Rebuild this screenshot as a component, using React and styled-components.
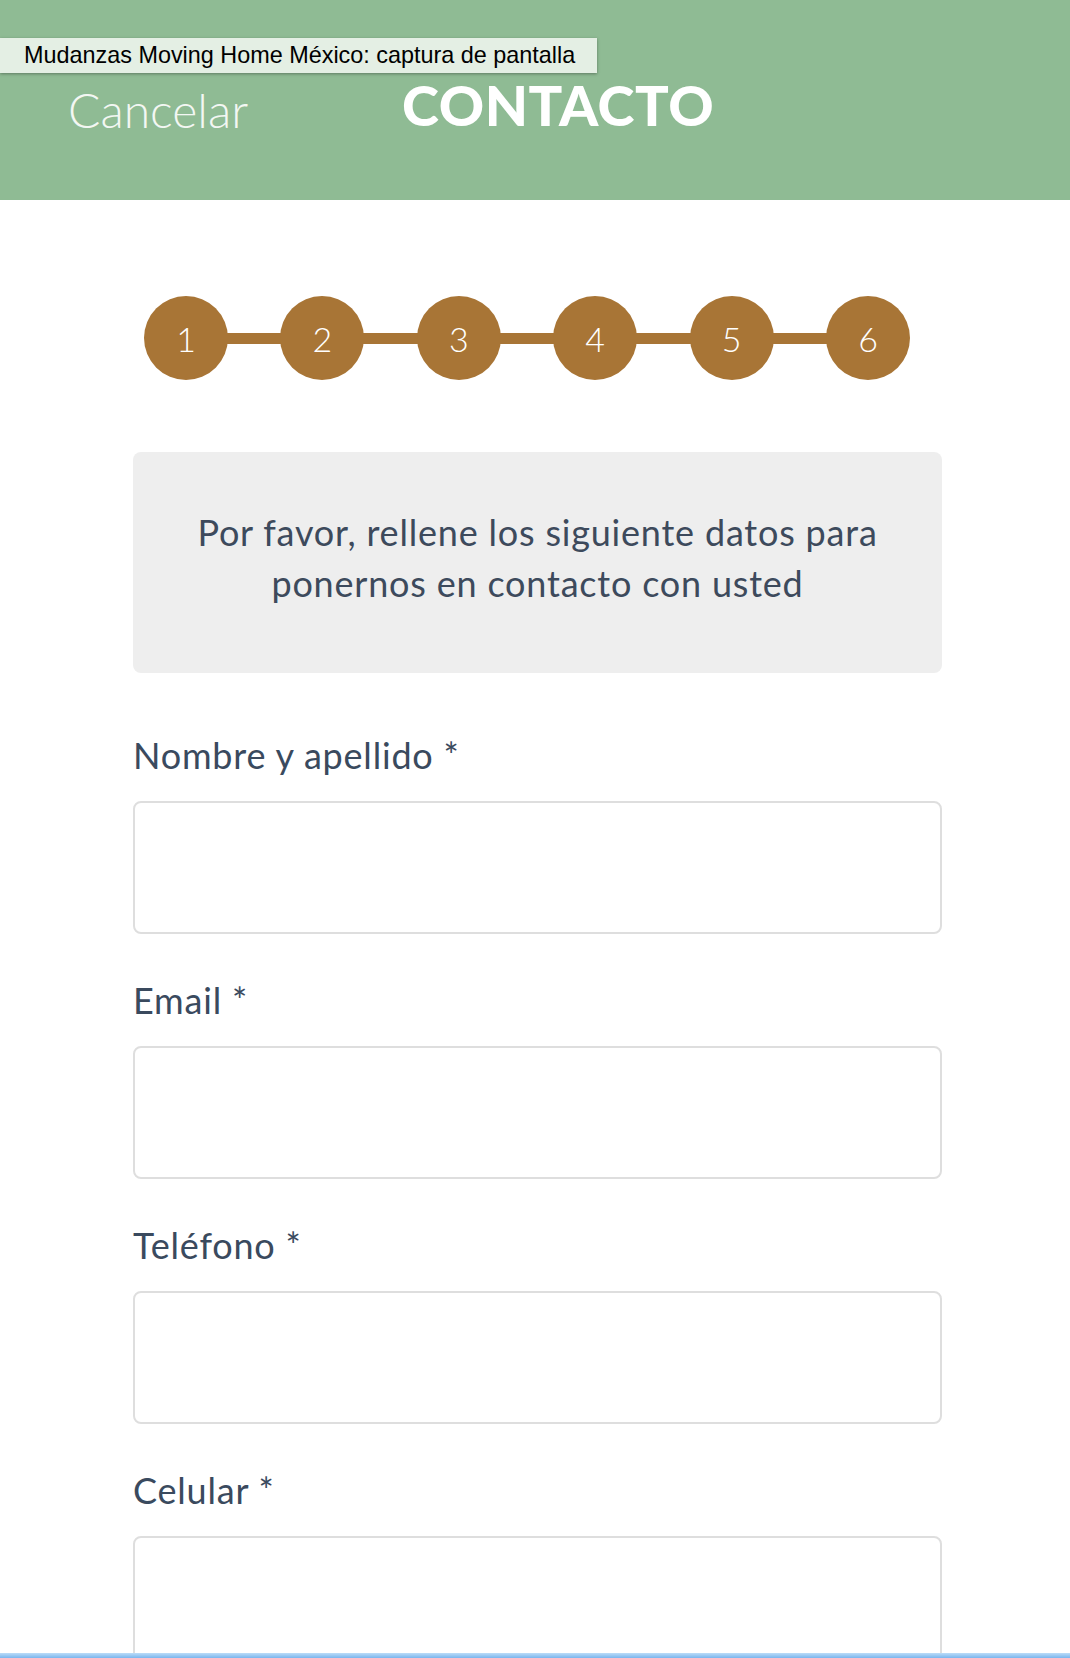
import React from "react"
import styled, { createGlobalStyle } from "styled-components"

const GlobalStyle = createGlobalStyle`
    html, body {
        margin: 0;
        padding: 0;
        background: #ffffff;
        font-family: "Lato", "Noto Sans", sans-serif;
        overflow: hidden;
    }
    * {
        box-sizing: border-box;
    }
`

const Page = styled.div`
    position: relative;
    min-height: 1658px;
`

const Header = styled.header`
    display: flex;
    align-items: center;
    gap: 154px;
    height: 200px;
    padding: 20px 0 0 68px;
    background-color: #8fbb94;
`

const Cancel = styled.span`
    font-size: 48px;
    font-weight: 300;
    line-height: 1;
    color: #f3f7f3;
`

const Title = styled.h1`
    margin: 0;
    font-size: 56px;
    font-weight: 900;
    line-height: 1;
    letter-spacing: 0.01em;
    color: #ffffff;
    transform: translateY(-5px);
`

const Tooltip = styled.div`
    position: absolute;
    top: 38px;
    left: 0;
    width: 597px;
    height: 35px;
    display: flex;
    align-items: center;
    padding-left: 24px;
    background-color: #e4efe4;
    box-shadow: 0 1px 3px rgba(0,0,0,0.35);
    font-family: "Liberation Sans", Arial, sans-serif;
    font-size: 23.4px;
    color: #000000;
`

const Main = styled.main`
    width: 809px;
    margin-left: 133px;
    padding-top: 96px;
`

const Stepper = styled.ol`
    display: flex;
    align-items: center;
    width: 766px;
    margin: 0 0 0 11px;
    padding: 0;
    list-style: none;
`

const Step = styled.li`
    flex: none;
    width: 84px;
    height: 84px;
    display: flex;
    align-items: center;
    justify-content: center;
    border-radius: 50%;
    background-color: #a87536;
    color: #ffffff;
    font-size: 34px;
    font-weight: 300;
`

const Connector = styled.span`
    flex: 1;
    height: 11px;
    margin: 0 -2px;
    background-color: #a87536;
`

const InfoBox = styled.div`
    display: flex;
    align-items: center;
    justify-content: center;
    height: 221px;
    margin-top: 72px;
    padding: 0 20px 10px;
    background-color: #eeeeee;
    border-radius: 8px;
    text-align: center;
    font-size: 36px;
    letter-spacing: 0.8px;
    line-height: 51px;
    color: #3d4a5c;
`

const Field = styled.div`
    display: flex;
    flex-direction: column;
    margin-top: ${props => props.first ? "59px" : "43px"};
`

const Label = styled.label`
    font-size: 36px;
    letter-spacing: 0.8px;
    line-height: 46px;
    color: #3a4a5e;
`

const Input = styled.input`
    width: 100%;
    height: 133px;
    margin-top: 23px;
    border: 2px solid #dedede;
    border-radius: 8px;
    background: #ffffff;
    outline: none;
`

const WindowEdge = styled.div`
    position: fixed;
    left: 0;
    right: 0;
    bottom: 0;
    height: 5px;
    background: linear-gradient(#bcdcf8, #7ab6ee);
`

const fields = ["Nombre y apellido *", "Email *", "Teléfono *", "Celular *"]

export default function App() {
    const steps = [1, 2, 3, 4, 5, 6]
    return (
        <Page>
            <GlobalStyle />
            <Header>
                <Cancel>Cancelar</Cancel>
                <Title>CONTACTO</Title>
            </Header>
            <Tooltip>Mudanzas Moving Home México: captura de pantalla</Tooltip>
            <Main>
                <Stepper>
                    {steps.map((n, i) => (
                        <React.Fragment key={n}>
                            {i > 0 && <Connector />}
                            <Step>{n}</Step>
                        </React.Fragment>
                    ))}
                </Stepper>
                <InfoBox>
                    Por favor, rellene los siguiente datos para<br />
                    ponernos en contacto con usted
                </InfoBox>
                {fields.map((f, i) => (
                    <Field key={f} first={i === 0}>
                        <Label>{f}</Label>
                        <Input type="text" />
                    </Field>
                ))}
            </Main>
            <WindowEdge />
        </Page>
    )
}
